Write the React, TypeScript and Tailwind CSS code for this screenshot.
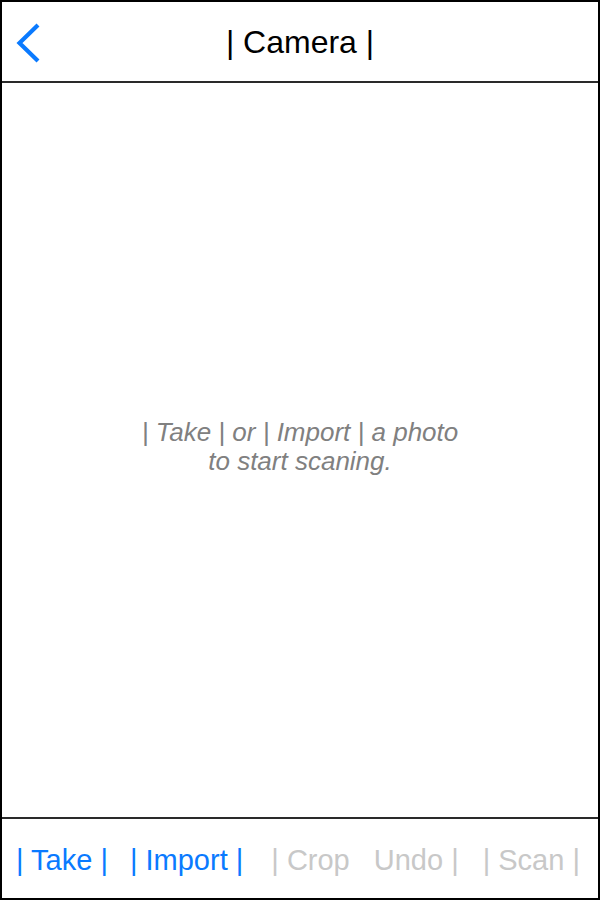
const App = () => {
  return (
    <div className="w-[600px] h-[900px] flex flex-col bg-white border-2 border-black font-['Liberation_Sans',Arial,sans-serif]">
      <header className="relative h-[81px] shrink-0 flex items-center justify-center border-b-2 border-[#2a2a2a]">
        <svg
          className="absolute left-[12px] top-[19px]"
          width="30"
          height="44"
          viewBox="0 0 30 44"
          fill="none"
        >
          <path d="M24 4 L5.5 22 L24 40" stroke="#0a7aff" strokeWidth="4.2" />
        </svg>
        <h1 className="text-[32px] leading-none text-black">| Camera |</h1>
      </header>

      <main className="flex-1 flex items-center justify-center bg-white">
        <p className="text-[26px] leading-[29px] italic text-[#808080] text-center -mt-[6px]">
          | Take | or | Import | a photo
          <br />
          to start scaning.
        </p>
      </main>

      <footer className="h-[81px] shrink-0 flex items-center pt-[3px] border-t-2 border-[#2a2a2a] text-[29px] leading-none">
        <span className="ml-[14px] text-[#0a7aff]">| Take |</span>
        <span className="ml-[22px] text-[#0a7aff]">| Import |</span>
        <span className="ml-[28px] text-[#c8c8c8]">| Crop</span>
        <span className="ml-[24px] text-[#c8c8c8]">Undo |</span>
        <span className="ml-[24px] text-[#c8c8c8]">| Scan |</span>
      </footer>
    </div>
  );
};

export default App;
